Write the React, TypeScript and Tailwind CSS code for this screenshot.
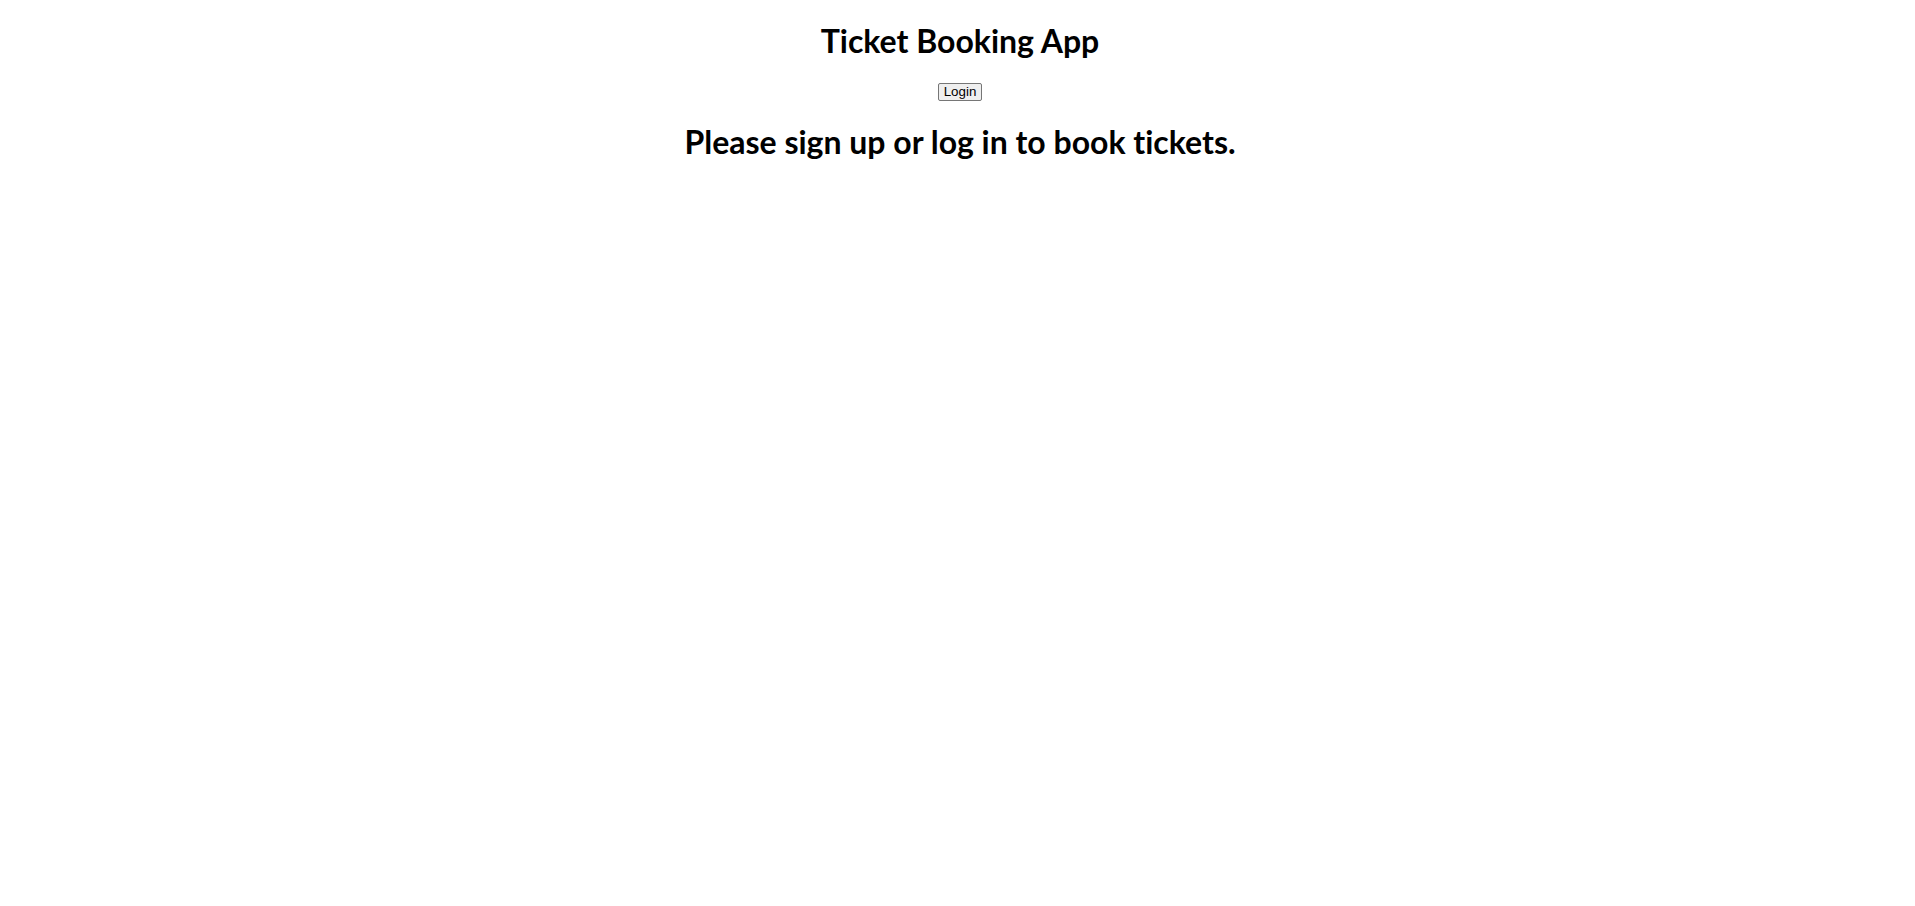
import React from "react";

export default function App() {
  return (
    <div className="min-h-screen bg-white text-black text-center pt-[19px] pl-[5px] [font-variant-ligatures:none]" style={{ fontFamily: "Lato, 'Open Sans', sans-serif" }}>
      <h1 className="text-[32px] leading-[43px] font-bold">Ticket Booking App</h1>
      <div className="mt-[21px] flex justify-center">
        <button className="h-[18px] px-[5px] border border-[#767676] rounded-[2px] bg-[#efefef] text-[13.33px] leading-[16px] text-black font-['Liberation_Sans',Arial,sans-serif]">
          Login
        </button>
      </div>
      <h2 className="mt-[19px] text-[32px] leading-[43px] font-bold">Please sign up or log in to book tickets.</h2>
    </div>
  );
}
